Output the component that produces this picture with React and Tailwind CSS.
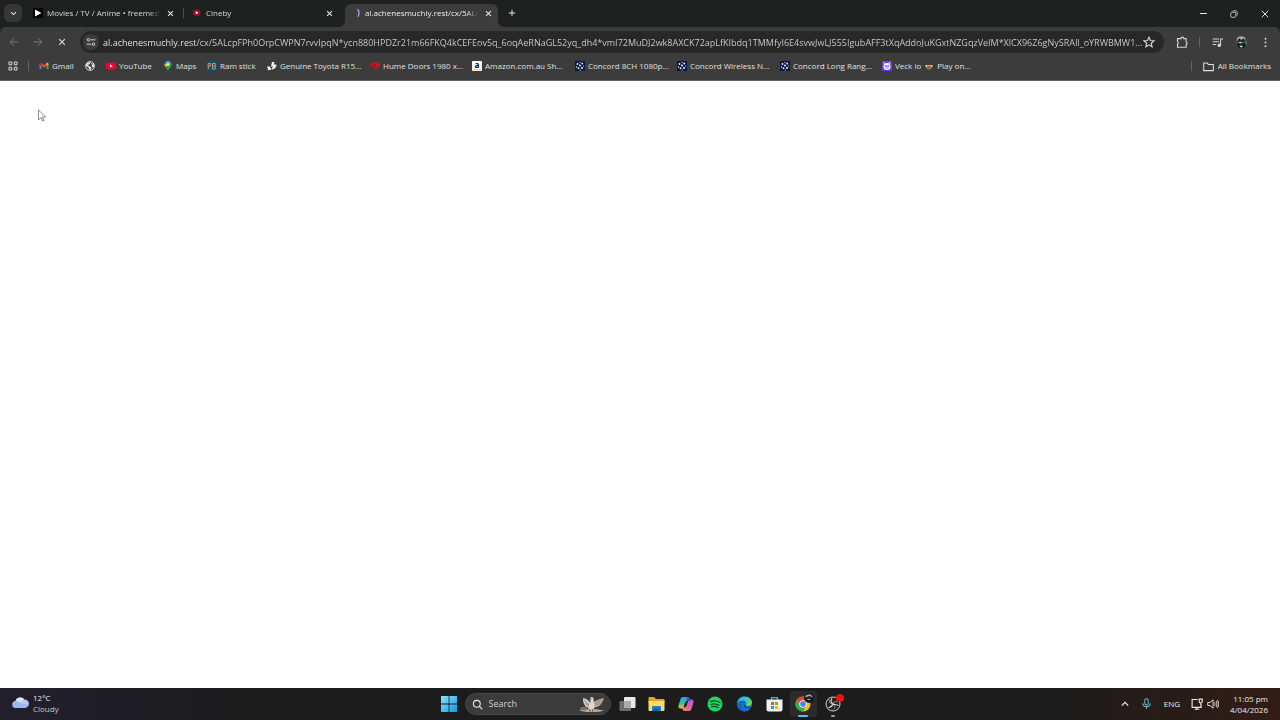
import React from "react";

const URL_TEXT =
  "al.achenesmuchly.rest/cx/5ALcpFPh0OrpCWPN7rvvIpqN*ycn880HPDZr21m66FKQ4kCEFEov5q_6oqAeRNaGL52yq_dh4*vmI72MuDJ2wk8AXCK72apLfKIbdq1TMMfyI6E4svwJwLJ555IgubAFF3tXqAddoJuKGxtNZGqzVeIM*XlCX96Z6gNySRAIl_oYRWBMW1...";

function Svg({ size = "size-3", box = "0 0 16 16", children }) {
  return (
    <svg className={`${size} shrink-0`} viewBox={box} fill="none" stroke="currentColor" strokeWidth="1.5" aria-hidden="true">
      {children}
    </svg>
  );
}

const Cross = ({ size = "size-2" }) => (
  <Svg size={size} box="0 0 10 10">
    <path d="M1.5 1.5 8.5 8.5M8.5 1.5 1.5 8.5" />
  </Svg>
);

const PlayFavicon = () => (
  <Svg size="size-[10px]" box="0 0 10 10">
    <path d="M0 0h10v10H0z" fill="#000" stroke="none" />
    <path d="M2 1.5 8.5 5 2 8.5z" fill="#fff" stroke="none" />
  </Svg>
);

const CinebyFavicon = () => (
  <Svg size="size-[10px]" box="0 0 10 10">
    <path d="M1 2.5 7 1.6 8.8 4.6 7 8 1.4 7.3z" fill="#a80f27" stroke="none" />
    <path d="M3.8 3.2 6.5 4.8 3.8 6.3z" fill="#fff" stroke="none" />
  </Svg>
);

const Spinner = () => (
  <Svg size="size-[10px]" box="0 0 10 10">
    <path d="M6.500 1.200Q9.200 4.500 7 8.800" stroke="#a9b6ee" strokeWidth="1.200" />
  </Svg>
);

function Tab({ icon, title, active, divider }) {
  return (
    <div
      className={`relative mr-[6px] flex h-[23px] w-[153px] items-center pb-[5px] pl-[6px] pr-[5px] ${
        active ? "rounded-t-md bg-[#3c3c3c] text-[#eeeeee]" : "text-[#dadada]"
      }`}
    >
      {active && (
        <>
          <svg className="absolute -left-[6px] bottom-0 size-[6px]" viewBox="0 0 6 6" aria-hidden="true">
            <path d="M6 0V6H0A6 6 0 0 0 6 0" fill="#3c3c3c" />
          </svg>
          <svg className="absolute -right-[6px] bottom-0 size-[6px]" viewBox="0 0 6 6" aria-hidden="true">
            <path d="M0 0V6H6A6 6 0 0 1 0 0" fill="#3c3c3c" />
          </svg>
        </>
      )}
      <button role="tab" aria-selected={!!active} className="flex min-w-0 flex-1 items-center gap-1">
        {icon}
        <span className="w-[113px] overflow-hidden whitespace-nowrap text-left text-[8px] leading-3 [mask-image:linear-gradient(to_right,#000_90%,transparent)]">
          {title}
        </span>
      </button>
      <button aria-label={`Close ${title}`} className="flex size-[10px] shrink-0 items-center justify-center text-[#e6e6e6]">
        <Cross size="size-[7px]" />
      </button>
      {divider && <span className="absolute -right-[4px] top-[4px] h-[10px] w-px bg-[#4c4c4c]" />}
    </div>
  );
}

const GmailIcon = () => (
  <Svg size="size-[10px]" box="0 0 20 20">
    <g stroke="none">
      <path d="M1 6v10h4V8z" fill="#4285f4" />
      <path d="M15 8v8h4V6z" fill="#34a853" />
      <path d="M1 5.5Q2 2.5 5 4l5 4 5-4v5.500l-5 4-5-4L1 7z" fill="#ea4335" />
      <path d="M15 4q3-1.500 4 1.500V7l-4 3z" fill="#fbbc04" />
      <path d="M1 5.500Q2 2.500 5 4v6L1 7z" fill="#c5221f" />
    </g>
  </Svg>
);

const GlobeIcon = () => (
  <Svg size="size-[10px]" box="0 0 20 20">
    <circle cx="10" cy="10" r="8.800" stroke="#d8d8d8" strokeWidth="2" />
    <path d="M2 6l6-4 3 1-1 3-3 1v3l4 1 2 3-2 4-3-1-1-4-5-3zM13 4l5 3v5l-3 1-2-3 2-2-3-2z" fill="#d8d8d8" stroke="none" />
  </Svg>
);

const YouTubeIcon = () => (
  <Svg size="size-[10px]" box="0 0 20 20">
    <rect x="0" y="3" width="20" height="14" rx="3.5" fill="#f00033" stroke="none" />
    <path d="M8 7l5.500 3L8 13z" fill="#fff" stroke="none" />
  </Svg>
);

const MapsIcon = () => (
  <Svg size="size-[10px]" box="0 0 20 20">
    <g stroke="none">
      <path d="M10 0a7 7 0 0 0-7 7c0 5 5 7 7 13 2-6 7-8 7-13a7 7 0 0 0-7-7z" fill="#34a853" />
      <path d="M10 0a7 7 0 0 1 6 3.500L10 9z" fill="#4285f4" />
      <path d="M10 0a7 7 0 0 0-5.500 2.500L9 7l4-6z" fill="#4e8df5" />
      <path d="M4.500 2.500A7 7 0 0 0 3 7l3 2 4-4z" fill="#ea4335" />
      <path d="M3 7q0 3 2 5l8-9-3 1z" fill="#fbbc04" />
      <circle cx="10" cy="7" r="2.600" fill="#fff" />
    </g>
  </Svg>
);

const RamIcon = () => (
  <Svg size="size-[10px]" box="0 0 20 20">
    <path d="M0 0h20v20H0z" fill="#16506a" stroke="none" />
    <path d="M2.500 16V5h4.500v5H3M11 16V5h5.500v11H11M11 10h5" stroke="#c09a78" strokeWidth="2" />
  </Svg>
);

const ToyotaIcon = () => (
  <Svg size="size-[10px]" box="0 0 20 20">
    <path d="M10 2h5l-1.500 5H19q0 8-8 10H9l3-6H8zM1 11h6l-1 3h3l-2 4H1l1.500-4H0z" fill="#f4f4f4" stroke="none" />
  </Svg>
);

const HumeIcon = () => (
  <Svg size="size-[10px]" box="0 0 20 20">
    <path d="M0 5 12 2l8 3v7l-5 1v5l-6-2v-5L0 9z" fill="#c8141c" stroke="none" />
    <path d="M6 6l5 1v3" stroke="#7e1216" strokeWidth="1.500" />
  </Svg>
);

const AmazonIcon = () => (
  <span className="flex size-[10px] shrink-0 flex-col items-center justify-end rounded-[1px] bg-white text-black">
    <span className="text-[8px] font-bold leading-[8px]">a</span>
    <Svg size="h-[2px] w-[9px]" box="0 0 18 4">
      <path d="M1 .5q8 4 15 0" stroke="#f29a1f" strokeWidth="1.500" />
    </Svg>
  </span>
);

const ConcordIcon = () => (
  <Svg size="size-[10px]" box="0 0 20 20">
    <path d="M0 0h20v20H0z" fill="#0b1a45" stroke="none" />
    <g fill="#eef4fb" stroke="none">
      <circle cx="10" cy="3" r="1.200" /><circle cx="5" cy="6" r="1.800" /><circle cx="14.500" cy="5" r="1.800" />
      <circle cx="10" cy="9" r="2" /><circle cx="17" cy="10" r="1.200" /><circle cx="3" cy="12" r="1.300" />
      <circle cx="7" cy="14.500" r="1.800" /><circle cx="14" cy="14" r="2" /><circle cx="10.500" cy="18" r="1.200" />
    </g>
  </Svg>
);

const VeckIcon = () => (
  <Svg size="size-[10px]" box="0 0 20 20">
    <rect width="20" height="20" rx="3" fill="#6d3fe0" stroke="none" />
    <path d="M3 3l4 3M16 2l-2 4" stroke="#fff" strokeWidth="2" />
    <circle cx="10" cy="11" r="7" fill="#fff" stroke="none" />
    <path d="M6 8l3 1v3H6zM11 9l3-1v4h-3zM7 14.500h6" stroke="#6d3fe0" strokeWidth="1.200" />
  </Svg>
);

const MelonIcon = () => (
  <svg className="mx-1 inline-block h-[6px] w-[8px]" viewBox="0 0 16 12" role="img" aria-label="watermelon">
    <path d="M0 2h16q-1 8-8 9.500Q1 10 0 2" fill="#459b46" />
    <path d="M1 2h14l-1 4H2z" fill="#f0e8c8" />
    <path d="M3 3h10q-1 5-5 6-4-1-5-6" fill="#e1464e" />
  </svg>
);

const bookmarks = [
  { label: "Gmail", icon: <GmailIcon />, width: "w-[46px]" },
  { label: "", name: "Website", icon: <GlobeIcon />, width: "w-[21px]" },
  { label: "YouTube", icon: <YouTubeIcon />, width: "w-[57px]" },
  { label: "Maps", icon: <MapsIcon />, width: "w-[44px]" },
  { label: "Ram stick", icon: <RamIcon />, width: "w-[60px]" },
  { label: "Genuine Toyota R15...", icon: <ToyotaIcon />, width: "w-[103px]" },
  { label: "Hume Doors 1980 x...", icon: <HumeIcon />, width: "w-[102px]" },
  { label: "Amazon.com.au Sh...", icon: <AmazonIcon />, width: "w-[103px]" },
  { label: "Concord 8CH 1080p...", icon: <ConcordIcon />, width: "w-[102px]" },
  { label: "Concord Wireless N...", icon: <ConcordIcon />, width: "w-[103px]" },
  { label: "Concord Long Rang...", icon: <ConcordIcon />, width: "w-[102px]" },
  { label: <>Veck io<MelonIcon />Play on...</>, name: "Veck io", icon: <VeckIcon />, width: "w-[103px]" },
];

function IconButton({ label, className = "", children }) {
  return (
    <button aria-label={label} className={`flex h-6 w-6 shrink-0 items-center justify-center ${className}`}>
      {children}
    </button>
  );
}

const AvatarArt = ({ size }) => (
  <Svg size={size} box="0 0 26 26">
    <g stroke="none">
      <circle cx="13" cy="13" r="13" fill="#3b4a48" />
      <path d="M4 4q8-7 17 0l-3 6-7-3-7 3z" fill="#a9b3b0" />
      <path d="M5 8l5-4 2 5 5-5 3 6-6 1-6 2z" fill="#1a1f1f" />
      <path d="M3 16l7-2 3 3 6-3 3 5-5 6-9-1z" fill="#16191a" />
      <path d="M7 13l4-2 3 2-4 2zM9 19l7 1-2 3-4-1z" fill="#d2d2d2" />
      <path d="M20 6q5 5 4 12l-4-3z" fill="#2d7565" />
    </g>
  </Svg>
);

const WindowsLogo = () => (
  <svg className="size-4" viewBox="0 0 16 16" aria-hidden="true">
    <defs>
      <linearGradient id="win" x1="0" y1="0" x2="1" y2="1">
        <stop offset="0" stopColor="#8be4fb" />
        <stop offset="1" stopColor="#1098e6" />
      </linearGradient>
    </defs>
    <path d="M0 0h7.600v7.600H0zM8.400 0H16v7.600H8.400zM0 8.400h7.600V16H0zM8.400 8.400H16V16H8.400z" fill="url(#win)" />
  </svg>
);

const BirdArt = () => (
  <svg className="mr-1 h-[18px] w-[28px]" viewBox="0 0 56 36" aria-hidden="true">
    <path d="M2 30q24-4 50 1-10 4-28 3-14 0-22-4" fill="#b9a99c" />
    <path d="M4 26q8-5 14 0l-2 5-10-1z" fill="#7e736c" />
    <path d="M10 6q9 1 15 10l1 8-9 1q-8-8-7-19" fill="#cfc6be" />
    <path d="M52 6q-4 14-14 18l-8 2-2-9q10-9 24-11" fill="#b5a99f" />
    <path d="M24 6q4-4 7 1l1 9q3 9-3 14l-8-2q-2-7 4-13z" fill="#ddd5ce" />
    <path d="M22 8l4-2 1 3z" fill="#5e5049" />
    <path d="M13 11l9 9M15 17l7 5M47 9 34 18M45 15l-10 7" stroke="#857a72" strokeWidth="1.500" fill="none" />
    <path d="M24 29v4M29 29v4" stroke="#574e49" strokeWidth="2" />
  </svg>
);

const TaskViewIcon = () => (
  <svg className="h-4 w-[17px]" viewBox="0 0 34 32" aria-hidden="true">
    <rect x="10" y="2" width="23" height="22" rx="2" fill="#e8e8e8" />
    <rect x="1" y="10" width="23" height="20" rx="2" fill="#777" fillOpacity=".9" />
    <path d="M10 10h14v14H10z" fill="#aaa" />
  </svg>
);

const ExplorerIcon = () => (
  <svg className="h-4 w-[17px]" viewBox="0 0 34 32" aria-hidden="true">
    <path d="M1 4q0-2 2-2h9l4 4h15q2 0 2 2v6H1z" fill="#e2a522" />
    <path d="M1 10h32v18q0 2-2 2H3q-2 0-2-2z" fill="#ffd867" />
    <path d="M8 22q0-2 2-2h14q2 0 2 2v8H8z" fill="#1685cb" />
    <path d="M11 25h12v5H11z" fill="#0c609f" />
  </svg>
);

const CopilotIcon = () => (
  <svg className="size-4" viewBox="0 0 32 32" aria-hidden="true">
    <defs>
      <linearGradient id="cpA" x1="0" y1="0" x2="0" y2="1">
        <stop offset="0" stopColor="#1fa4e8" />
        <stop offset=".55" stopColor="#3ac095" />
        <stop offset="1" stopColor="#f4c32c" />
      </linearGradient>
      <linearGradient id="cpB" x1="1" y1="0" x2="0" y2="1">
        <stop offset="0" stopColor="#a65af0" />
        <stop offset=".5" stopColor="#e85a9c" />
        <stop offset="1" stopColor="#ff9550" />
      </linearGradient>
    </defs>
    <path d="M10 2h9q3 0 4 4l1 3h-5q-3 0-4 4l-3 9q-1 3-4 3H5q-5 0-4-6L5 6q1-4 5-4" fill="url(#cpA)" />
    <path d="M22 30h-9q-3 0-4-4l-1-3h5q3 0 4-4l3-9q1-3 4-3h3q5 0 4 6l-4 13q-1 4-5 4" fill="url(#cpB)" />
    <path d="M16 3h4q3 0 4 4l1 3h-6z" fill="#2356cf" />
    <path d="M14 13h5l-2 7h-5z" fill="#222" />
  </svg>
);

const SpotifyIcon = () => (
  <svg className="size-4" viewBox="0 0 32 32" aria-hidden="true">
    <circle cx="16" cy="16" r="15" fill="#1ed760" />
    <path d="M7 11q10-3 19 2M8 16.500q8-2.500 16 2M9 21.500q7-2 13 1.500" stroke="#173c23" strokeWidth="2.600" strokeLinecap="round" fill="none" />
  </svg>
);

const EdgeIcon = () => (
  <svg className="h-4 w-[17px]" viewBox="0 0 32 32" aria-hidden="true">
    <defs>
      <linearGradient id="edgeTop" x1="0" y1="0" x2="1" y2=".4">
        <stop offset="0" stopColor="#2aa8e8" />
        <stop offset=".6" stopColor="#35c1d8" />
        <stop offset="1" stopColor="#63dc5a" />
      </linearGradient>
    </defs>
    <circle cx="16" cy="16" r="15" fill="#1475cf" />
    <path d="M1 15C2 6 9 1 16 1c9 0 15 6 15 12 0 5-4 7-8 7-3 0-5-1-4-3 2-4-1-8-7-8-5 0-9 2-11 6" fill="url(#edgeTop)" />
    <path d="M11 15c-3 5 0 13 8 15-8 2-16-3-17-10 0-6 5-10 10-10 4 0 7 2 7 5-3-2-6-2-8 0" fill="#1268be" />
    <path d="M18 17q-1 3 1 5 5 3 11 0-1 1-2 2-9 2-13-3-1-3 3-4z" fill="#1c2836" />
  </svg>
);

const StoreIcon = () => (
  <svg className="h-4 w-[17px]" viewBox="0 0 34 32" aria-hidden="true">
    <path d="M11 8V3h12v5" stroke="#48b6e8" strokeWidth="2.500" fill="none" />
    <path d="M1 7h32v20q0 4-4 4H5q-4 0-4-4z" fill="#f2f2f2" />
    <path d="M10 12h6v6h-6z" fill="#f25022" />
    <path d="M18 12h6v6h-6z" fill="#7fba00" />
    <path d="M10 20h6v6h-6z" fill="#00a4ef" />
    <path d="M18 20h6v6h-6z" fill="#ffb900" />
  </svg>
);

const ChromeIcon = () => (
  <svg className="size-4" viewBox="0 0 32 32" aria-hidden="true">
    <circle cx="16" cy="16" r="15" fill="#fbbc04" />
    <path d="M3 8.500A15 15 0 0 1 29 8.500H16L9 19z" fill="#ea4335" />
    <path d="M3 8.500 9.500 20 22 20.500 16 31A15 15 0 0 1 3 8.500" fill="#34a853" />
    <circle cx="16" cy="16" r="7.500" fill="#fff" />
    <circle cx="16" cy="16" r="5.800" fill="#4285f4" />
  </svg>
);

const ObsIcon = () => (
  <svg className="size-4" viewBox="0 0 32 32" fill="none" stroke="#d4d4d4" strokeWidth="2" aria-hidden="true">
    <circle cx="16" cy="16" r="14" fill="#202020" />
    <path d="M14 5q-5 6 2 11M27 19q-7-3-11-3M7 23q7-1 9-7" strokeWidth="2.500" />
    <path d="M9 8q-2 8 7 8M25 12q-7-3-9 4M17 27q6-5-1-11" strokeWidth="1.200" />
  </svg>
);

const apps = [
  { name: "Task View", icon: <TaskViewIcon /> },
  { name: "File Explorer", icon: <ExplorerIcon /> },
  { name: "Copilot", icon: <CopilotIcon /> },
  { name: "Spotify", icon: <SpotifyIcon /> },
  { name: "Microsoft Edge", icon: <EdgeIcon /> },
  { name: "Microsoft Store", icon: <StoreIcon /> },
  { name: "Google Chrome", icon: <ChromeIcon />, state: "active" },
  { name: "OBS Studio", icon: <ObsIcon />, state: "running" },
];

function TabStrip() {
  return (
    <header className="flex h-[27px] items-end bg-[#1f2020]">
      <button aria-label="Search tabs" className="mb-[5px] ml-1 mr-[5px] flex size-[18px] items-center justify-center rounded-md bg-[#373737] text-[#e4e4e4]">
        <Svg size="size-[7px]" box="0 0 10 10">
          <path d="M1.500 3 5 6.500 8.500 3" />
        </Svg>
      </button>
      <div role="tablist" aria-label="Tabs" className="flex">
        <Tab icon={<PlayFavicon />} title="Movies / TV / Anime • freemed" divider />
        <Tab icon={<CinebyFavicon />} title="Cineby" />
        <Tab icon={<Spinner />} title="al.achenesmuchly.rest/cx/5ALcp" active />
      </div>
      <button aria-label="New tab" className="-ml-px mb-[5px] flex size-[18px] items-center justify-center text-[#e0e0e0]">
        <Svg size="size-2" box="0 0 10 10">
          <path d="M5 1v8M1 5h8" strokeWidth="1.300" />
        </Svg>
      </button>
      <div className="ml-auto flex h-full text-[#e8e8e8]">
        <button aria-label="Minimize" className="flex w-[31px] items-center justify-center">
          <Svg size="size-2" box="0 0 8 8"><path d="M1 3.500h7" strokeWidth="1" /></Svg>
        </button>
        <button aria-label="Restore" className="flex w-[31px] items-center justify-center">
          <Svg size="size-2" box="0 0 16 16">
            <rect x="1.500" y="4.500" width="10" height="10" rx="2" />
            <path d="M5 3Q5.500 1.500 7.500 1.500h3q4 0 4 4v3q0 2-1.500 2.500" />
          </Svg>
        </button>
        <button aria-label="Close window" className="flex w-[31px] items-center justify-center">
          <Svg size="size-2" box="0 0 10 10"><path d="M1 1l8 8M9 1 1 9" strokeWidth="1.200" /></Svg>
        </button>
      </div>
    </header>
  );
}

function Toolbar() {
  return (
    <div className="bg-[#1f2020]">
      <div className="flex h-[30px] items-center rounded-t-md bg-[#3c3c3c] pl-[2px] pr-[3px] text-[#d6d6d6]">
        <IconButton label="Back" className="text-[#7c7c7c]">
          <Svg size="size-[10px]"><path d="M15 8H2M8 2 2 8l6 6" /></Svg>
        </IconButton>
        <IconButton label="Forward" className="text-[#7c7c7c]">
          <Svg size="size-[10px]"><path d="M1 8h13M8 2l6 6-6 6" /></Svg>
        </IconButton>
        <IconButton label="Stop loading">
          <Cross size="size-2" />
        </IconButton>
        <div className="mx-[6px] flex h-[22px] min-w-0 flex-1 items-center rounded-full bg-[#282828] pl-[3px] pr-[9px]">
          <button aria-label="Site information" className="flex size-4 shrink-0 items-center justify-center rounded-full bg-[#3c3c3c]">
            <Svg size="size-[10px]">
              <circle cx="4" cy="4.500" r="2" />
              <path d="M7.500 4.500H15M1 11.500h7.500" />
              <circle cx="12" cy="11.500" r="2" />
            </Svg>
          </button>
          <input
            aria-label="Address"
            defaultValue={URL_TEXT}
            className="ml-1 h-4 min-w-0 flex-1 bg-linear-to-r from-[#f2f2f2] from-[94px] to-[#d2d2d2] to-[94px] bg-clip-text text-[9px] text-transparent outline-none"
          />
          <button aria-label="Bookmark this tab" className="flex h-4 shrink-0 items-center">
            <Svg size="size-3">
              <path d="M8 1.500 9.900 6l4.800.4-3.700 3.200 1.100 4.700L8 11.800l-4.100 2.500L5 9.600 1.300 6.400 6.100 6z" />
            </Svg>
          </button>
        </div>
        <IconButton label="Extensions">
          <Svg size="size-3">
            <path d="M2 3.500h4.500a2 2 0 0 1 4 0h3V8a1.800 1.800 0 0 1 0 3.500V15H2v-4a2 2 0 0 0 0-3.500z" />
          </Svg>
        </IconButton>
        <span className="mx-[5px] h-[10px] w-px bg-[#646464]" />
        <IconButton label="Media controls">
          <Svg size="size-[11px]">
            <path d="M1 3h9M1 7h9M1 11h5M12.500 12V3H16" />
            <circle cx="10.500" cy="12" r="1.800" fill="currentColor" />
          </Svg>
        </IconButton>
        <IconButton label="Profile"><AvatarArt size="size-[13px]" /></IconButton>
        <IconButton label="Browser menu">
          <Svg size="size-[11px]">
            <g fill="currentColor" stroke="none">
              <circle cx="8" cy="2.500" r="1.400" /><circle cx="8" cy="8" r="1.400" /><circle cx="8" cy="13.500" r="1.400" />
            </g>
          </Svg>
        </IconButton>
      </div>
    </div>
  );
}

function BookmarkBar() {
  return (
    <nav aria-label="Bookmarks" className="flex h-6 items-center border-b border-[#646464] bg-[#3c3c3c] pb-[6px] pl-2 pr-[9px] pt-px text-[8px] leading-3 text-[#e0e0e0]">
      <button aria-label="Apps" className="shrink-0">
        <Svg size="size-[10px]">
          <path d="M1.500 1.500h4.500v4.500H1.500zM10 1.500h4.500v4.500H10zM1.500 10h4.500v4.500H1.500zM10 10h4.500v4.500H10z" />
        </Svg>
      </button>
      <span className="mx-[10px] h-[10px] w-px shrink-0 bg-[#646464]" />
      <div className="flex min-w-0 flex-1 overflow-hidden">
        {bookmarks.map((b, i) => (
          <a key={i} href="#" aria-label={b.name} className={`flex shrink-0 items-center gap-[3px] whitespace-nowrap ${b.width}`}>
            {b.icon}
            {b.label && <span>{b.label}</span>}
          </a>
        ))}
      </div>
      <span className="mr-[11px] h-[10px] w-px shrink-0 bg-[#646464]" />
      <button className="flex shrink-0 items-center gap-1">
        <Svg size="size-[11px]">
          <path d="M1 3h5l2 2h7v9H1z" />
        </Svg>
        All Bookmarks
      </button>
    </nav>
  );
}

function Taskbar() {
  return (
    <footer className="grid h-8 grid-cols-[1fr_auto_1fr] items-center bg-linear-to-r from-[#221f2c] via-[#1c1c1c] via-20% to-[#1c1c1c] text-[#ececec]">
      <button className="flex items-center gap-1 justify-self-start pb-[2px] pl-3 text-left text-[8px] leading-[11px]">
        <svg className="h-[17px] w-[17px]" viewBox="0 0 34 34" aria-hidden="true">
          <path d="M8 26a7 7 0 0 1-1-14 10 9 0 0 1 18-3 8 8 0 0 1 1 17z" fill="#9db9e9" />
          <path d="M7 12a10 9 0 0 1 18-3q-6 1-7 7-5-5-11-4" fill="#d9e7fb" />
          <path d="M17 17q3-6 9-7 6 3 6 9-7-3-15-2" fill="#b7cdf1" />
        </svg>
        <span>
          12°C
          <span className="block text-[#c8c8cc]">Cloudy</span>
        </span>
      </button>
      <div className="flex items-center">
        <button aria-label="Start" className="flex w-8 items-center justify-center"><WindowsLogo /></button>
        <label className="flex h-[22px] w-[146px] items-center rounded-full border border-[#484848] bg-[#3b3b3b] pl-[6px]">
          <Svg size="size-[11px]">
            <circle cx="7" cy="7" r="5" />
            <path d="M10.500 10.500 15 15" />
          </Svg>
          <input aria-label="Search" placeholder="Search" className="ml-[6px] w-0 flex-1 bg-transparent text-[9px] outline-none placeholder:text-[#d0d0d0]" />
          <BirdArt />
        </label>
        <div className="ml-[2px] grid w-[235px] grid-cols-8">
          {apps.map((app) => (
            <button
              key={app.name}
              aria-label={app.name}
              className={`relative mx-px flex h-[26px] items-center justify-center rounded-[3px] ${app.state === "active" ? "bg-[#2b2b2b]" : ""}`}
            >
              {app.icon}
              {app.state === "active" && (
                <>
                  <span className="absolute right-[3px] top-[2px] flex">
                    <svg className="size-[10px]" viewBox="0 0 26 26" aria-hidden="true">
                      <circle cx="13" cy="13" r="13" fill="#15191a" />
                      <path d="M3 8q9-9 18-1l2 5-9-4-9 4zM7 16l6-2 5 3-5 2z" fill="#99a3a1" />
                    </svg>
                  </span>
                  <span className="absolute bottom-0 h-[2px] w-[10px] rounded-full bg-[#58c3f2]" />
                </>
              )}
              {app.state === "running" && (
                <>
                  <span className="absolute right-[3px] top-[3px] size-2 rounded-full bg-[#f01212]" />
                  <span className="absolute bottom-0 h-[2px] w-1 rounded-full bg-[#9a9a9a]" />
                </>
              )}
            </button>
          ))}
        </div>
      </div>
      <div className="flex h-full items-center justify-end bg-linear-to-r from-[#1c1c1c] from-50% to-[#331c14] pb-px pr-3 text-[8px] leading-[11px]">
        <button aria-label="Show hidden icons" className="mr-3">
          <Svg size="size-2" box="0 0 10 10"><path d="M1 7l4-4 4 4" /></Svg>
        </button>
        <button aria-label="Microphone" className="mr-3 text-[#66b8c4]">
          <Svg size="size-[11px]">
            <rect x="5.500" y="1" width="5" height="9" rx="2.500" />
            <path d="M2.500 7.500q0 5 5.500 5t5.500-5M8 12.500V16" />
          </Svg>
        </button>
        <button className="mr-[11px]">ENG</button>
        <button aria-label="Network and volume" className="mr-[11px] flex gap-1">
          <Svg size="size-3">
            <path d="M9 2H1.500v10.500h12V9M5 15h6M7.500 12.500V15M11 1.500v3q0 2 2 2t2-2v-3zM13 6.500V10" />
          </Svg>
          <Svg size="size-3">
            <path d="M1 6v4h3l4 3.500v-11L4 6zM10 6q1.500 2 0 4M12 4q3 4 0 8M14 2.500q4 5.500 0 11" strokeWidth="1.200" />
          </Svg>
        </button>
        <button className="text-right">
          11:05 pm
          <span className="block">4/04/2026</span>
        </button>
      </div>
    </footer>
  );
}

export default function App() {
  return (
    <div className="flex min-h-screen flex-col bg-white font-['Open_Sans','Noto_Sans',sans-serif]">
      <TabStrip />
      <Toolbar />
      <BookmarkBar />
      <main className="relative flex-1 bg-white" aria-label="Page">
        <svg className="absolute left-[38px] top-[28px] h-[13px] w-2" viewBox="0 0 16 26" aria-hidden="true">
          <path d="M1 2v20l5-5 3 7 3-1-3-7h6z" fill="#fff" stroke="#666" strokeWidth="1.500" />
        </svg>
      </main>
      <Taskbar />
    </div>
  );
}
